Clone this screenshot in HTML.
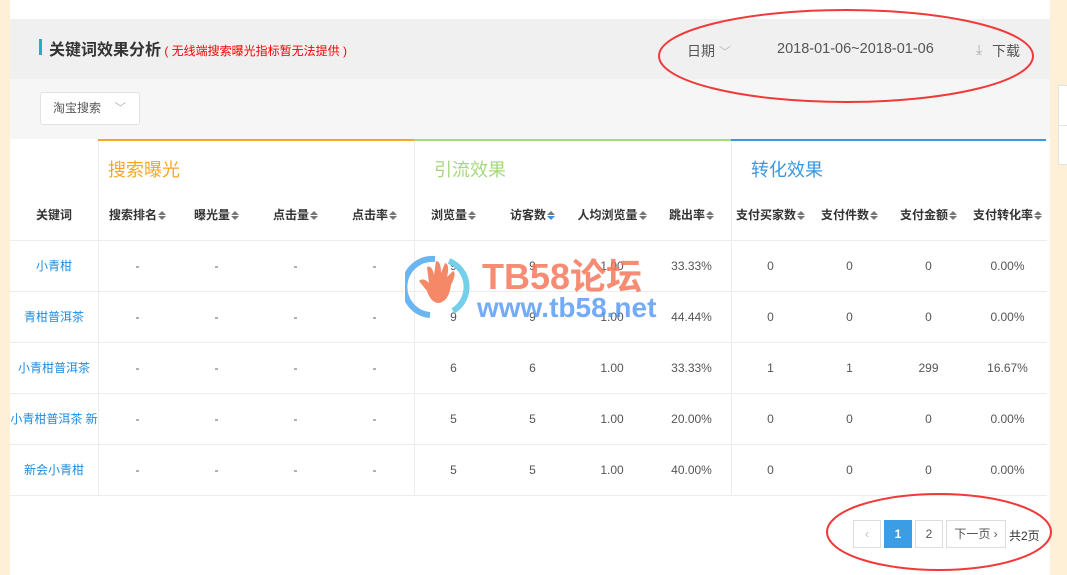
<!DOCTYPE html>
<html><head><meta charset="utf-8"><style>
*{margin:0;padding:0;box-sizing:border-box}
body{width:1067px;height:575px;overflow:hidden;background:#fff;font-family:"Liberation Sans","Noto Sans CJK SC",sans-serif;position:relative;color:#333}
.a{position:absolute}
table{position:absolute;left:10px;top:190px;border-collapse:collapse;table-layout:fixed;width:1036px}
td{height:51px;text-align:center;font-size:12px;color:#555;border-bottom:1px solid #ececec}
th{height:50px;font-size:12px;color:#333;font-weight:bold;border-bottom:1px solid #ececec;white-space:nowrap}
td.k{color:#1f8ce0;white-space:nowrap;overflow:hidden}
.s{display:inline-block;width:8px;height:10px;vertical-align:middle;position:relative;margin-left:1px}
.s:before{content:"";position:absolute;left:0;top:0;border:4px solid transparent;border-bottom:4px solid #777;border-top:0}
.s:after{content:"";position:absolute;left:0;top:5px;border:4px solid transparent;border-top:4px solid #777;border-bottom:0}
.s.b:after{border-top-color:#3a8ee6}
.pg{position:absolute;top:520px;height:28px;border:1px solid #ddd;background:#fff;font-size:12px;color:#555;text-align:center;line-height:26px}
</style></head><body>
<div class="a" style="left:0;top:0;width:10px;height:575px;background:#fdf0d6"></div>
<div class="a" style="left:1050px;top:0;width:17px;height:575px;background:#fdf0d6"></div>
<div class="a" style="left:1058px;top:85px;width:9px;height:80px;background:#fff;border:1px solid #e3e3e3;border-right:0"></div>
<div class="a" style="left:1058px;top:125px;width:9px;height:1px;background:#e3e3e3"></div>
<div class="a" style="left:10px;top:19px;width:1040px;height:60px;background:#f0f0f0"></div>
<div class="a" style="left:10px;top:79px;width:1040px;height:60px;background:#f6f6f6"></div>
<div class="a" style="left:39px;top:39px;width:3px;height:16px;background:#1eb1c2"></div>
<div class="a" style="left:49px;top:36px;font-size:16px;font-weight:bold;color:#333">关键词效果分析<span style="font-size:12px;font-weight:normal;color:#f00"> ( 无线端搜索曝光指标暂无法提供 )</span></div>
<div class="a" style="left:687px;top:41px;font-size:14px;color:#555">日期 <span style="color:#bbb;font-size:12px">﹀</span></div>
<div class="a" style="left:777px;top:41px;font-size:14.5px;color:#555">2018-01-06~2018-01-06</div>
<div class="a" style="left:976px;top:41px;font-size:14px;color:#aaa">⤓</div>
<div class="a" style="left:992px;top:41px;font-size:14px;color:#555">下载</div>
<div class="a" style="left:40px;top:92px;width:100px;height:33px;background:#fff;border:1px solid #e2e2e2;border-radius:3px;font-size:12px;color:#555;line-height:31px;padding-left:12px">淘宝搜索 <span style="color:#bbb;margin-left:10px">﹀</span></div>
<div class="a" style="left:98px;top:139px;width:316px;height:2px;background:#f7a823"></div>
<div class="a" style="left:414px;top:139px;width:317px;height:2px;background:#a5d97c"></div>
<div class="a" style="left:731px;top:139px;width:315px;height:2px;background:#3a97e0"></div>
<div class="a" style="left:98px;top:141px;width:1px;height:354px;background:#ececec"></div>
<div class="a" style="left:414px;top:141px;width:1px;height:354px;background:#ececec"></div>
<div class="a" style="left:731px;top:141px;width:1px;height:354px;background:#ececec"></div>
<div class="a" style="left:108px;top:156px;font-size:18px;color:#f7a823">搜索曝光</div>
<div class="a" style="left:434px;top:156px;font-size:18px;color:#a5d97c">引流效果</div>
<div class="a" style="left:751px;top:156px;font-size:18px;color:#3a97e0">转化效果</div>
<table>
<colgroup><col style="width:88px"><col style="width:79px"><col style="width:79px"><col style="width:79px"><col style="width:79px"><col style="width:79px"><col style="width:79px"><col style="width:80px"><col style="width:79px"><col style="width:79px"><col style="width:79px"><col style="width:79px"><col style="width:79px"></colgroup>
<tr><th>关键词</th><th>搜索排名<i class="s"></i></th><th>曝光量<i class="s"></i></th><th>点击量<i class="s"></i></th><th>点击率<i class="s"></i></th><th>浏览量<i class="s"></i></th><th>访客数<i class="s b"></i></th><th>人均浏览量<i class="s"></i></th><th>跳出率<i class="s"></i></th><th>支付买家数<i class="s"></i></th><th>支付件数<i class="s"></i></th><th>支付金额<i class="s"></i></th><th>支付转化率<i class="s"></i></th></tr>
<tr><td class="k">小青柑</td><td>-</td><td>-</td><td>-</td><td>-</td><td>9</td><td>9</td><td>1.00</td><td>33.33%</td><td>0</td><td>0</td><td>0</td><td>0.00%</td></tr>
<tr><td class="k">青柑普洱茶</td><td>-</td><td>-</td><td>-</td><td>-</td><td>9</td><td>9</td><td>1.00</td><td>44.44%</td><td>0</td><td>0</td><td>0</td><td>0.00%</td></tr>
<tr><td class="k">小青柑普洱茶</td><td>-</td><td>-</td><td>-</td><td>-</td><td>6</td><td>6</td><td>1.00</td><td>33.33%</td><td>1</td><td>1</td><td>299</td><td>16.67%</td></tr>
<tr><td class="k">小青柑普洱茶 新</td><td>-</td><td>-</td><td>-</td><td>-</td><td>5</td><td>5</td><td>1.00</td><td>20.00%</td><td>0</td><td>0</td><td>0</td><td>0.00%</td></tr>
<tr><td class="k">新会小青柑</td><td>-</td><td>-</td><td>-</td><td>-</td><td>5</td><td>5</td><td>1.00</td><td>40.00%</td><td>0</td><td>0</td><td>0</td><td>0.00%</td></tr>
</table>
<svg class="a" style="left:405px;top:253px" width="70" height="70" viewBox="0 0 70 70"><path d="M30 6 A28 28 0 0 0 25 62" stroke="#6bb6f0" stroke-width="6" fill="none"/><path d="M44 8 A28 28 0 0 1 48 58" stroke="#74d0ea" stroke-width="6" fill="none"/><path d="M22 38 L14 28 Q18 24 24 30 L22 14 Q27 12 29 22 L31 8 Q36 8 36 20 L40 10 Q45 11 42 24 L48 18 Q52 20 46 32 Q44 48 34 50 Q26 50 22 38Z" fill="#f58866"/></svg>
<div class="a" style="left:482px;top:248px;font-size:36px;font-weight:bold;color:rgba(245,120,90,.85)">TB58论坛</div>
<div class="a" style="left:477px;top:292px;font-size:28px;font-weight:bold;color:rgba(80,150,245,.8)">www.tb58.net</div>
<div class="pg" style="left:853px;width:28px;color:#bbb">‹</div>
<div class="pg" style="left:884px;width:28px;background:#3a9de5;border-color:#3a9de5;color:#fff;font-weight:bold">1</div>
<div class="pg" style="left:915px;width:28px">2</div>
<div class="pg" style="left:946px;width:60px">下一页 ›</div>
<div class="a" style="left:1009px;top:527px;font-size:12px;color:#333">共2页</div>
<svg class="a" style="left:0;top:0" width="1067" height="575"><ellipse cx="846" cy="56" rx="187" ry="46" fill="none" stroke="#f03a3a" stroke-width="2"/><ellipse cx="939" cy="532" rx="112" ry="38" fill="none" stroke="#f03a3a" stroke-width="2"/></svg>
</body></html>
